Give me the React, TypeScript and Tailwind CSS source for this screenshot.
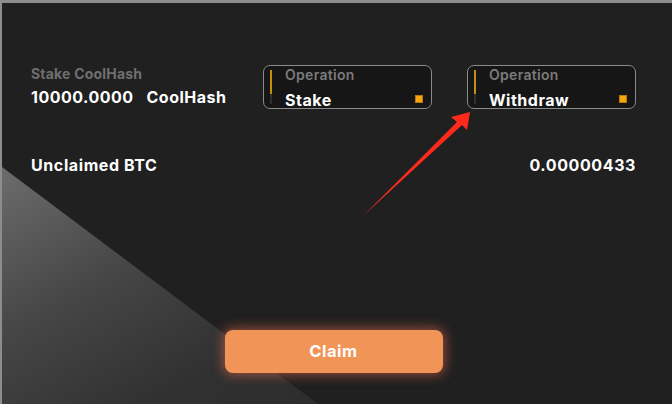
import React from "react";

function OpBox({ label, w }: { label: string; w: string }) {
  return (
    <div className={`relative flex h-[44px] ${w} rounded-[7px] border border-[#8a8a8a] bg-[#161616]`}>
      <div className="ml-[6px] mt-[4px] flex flex-col">
        <div className="h-[24px] w-[2px] bg-[#c58d0e]" />
        <div className="h-[10px] w-[2px] bg-[#303030]" />
      </div>
      <div className="ml-[13px] flex flex-col">
        <span className="mt-[1px] text-[14px] leading-[16px] font-semibold tracking-[0.3px] text-[#7b7b7b]">Operation</span>
        <span className="mt-[8px] text-[16px] leading-[18px] font-[750] tracking-[0.5px] text-white">{label}</span>
      </div>
      <div className="absolute right-[8px] top-[29px] h-[8px] w-[8px] border border-[#b8790a] bg-[#f6a50c]" />
    </div>
  );
}

export default function App() {
  return (
    <div
      className="relative h-[404px] w-[672px] overflow-hidden border-l-2 border-t-[3px] border-[#8d8d8d] bg-[#202020]"
      style={{ fontFamily: "Inter, 'Noto Sans', sans-serif" }}
    >
      {/* decorative diagonal shade */}
      <div className="absolute left-0 top-[164px] h-[240px] w-[320px] bg-[linear-gradient(150deg,#6c6c6c_0%,#464646_40%,#313131_75%,#2d2d2d_100%)] [clip-path:polygon(0_0,100%_100%,0_100%)]" />

      <div className="relative flex h-full flex-col pl-[29px] pr-[36px] pt-[62px]">
        <div className="flex items-start">
          <div className="flex w-[232px] flex-col">
            <span className="text-[14px] leading-[17px] font-bold tracking-[0.2px] text-[#6f6f6f]">Stake CoolHash</span>
            <span className="mt-[6px] text-[16px] leading-[19px] font-[750] tracking-[0.5px] text-white">
              10000.0000&nbsp;&nbsp; CoolHash
            </span>
          </div>
          <OpBox label="Stake" w="w-[169px]" />
          <div className="w-[35px]" />
          <OpBox label="Withdraw" w="w-[169px]" />
        </div>

        <div className="mt-[47px] flex justify-between text-[16px] leading-[19px] font-[750] tracking-[0.6px] text-white">
          <span>Unclaimed BTC</span>
          <span>0.00000433</span>
        </div>

        <div className="flex-1" />

        <button className="mx-auto mb-[31px] h-[43px] w-[218px] rounded-[8px] bg-[#f19457] text-[16.5px] font-[750] tracking-[0.5px] text-white shadow-[0_0_12px_2px_rgba(240,110,80,0.55)]">
          Claim
        </button>
      </div>

      <svg className="absolute left-0 top-0" width="672" height="404" viewBox="0 0 672 404">
        <polygon points="468,109 449,114 455,119 361,213 460,122 465,127" fill="#ff2a1b" />
      </svg>
    </div>
  );
}
